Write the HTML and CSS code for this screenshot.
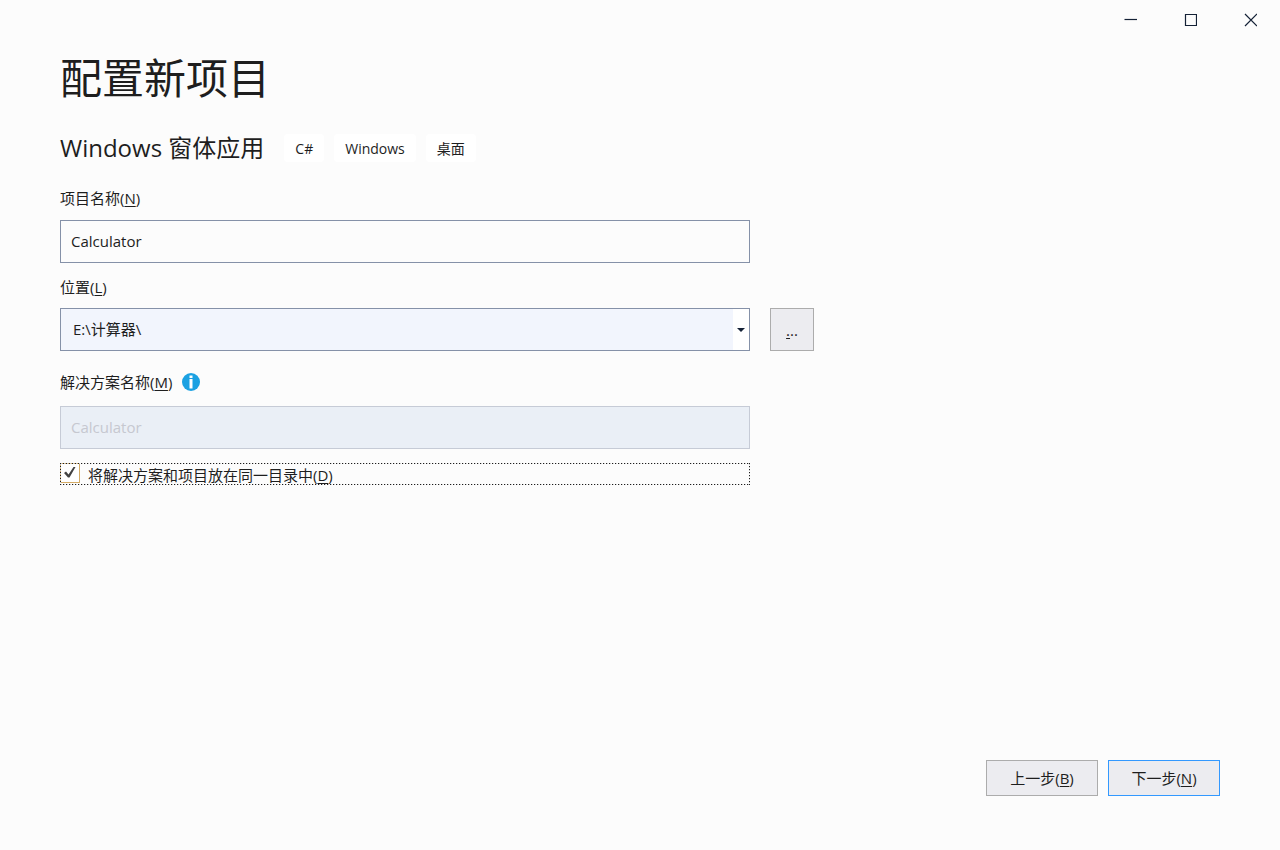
FILE: index.html
```html
<!DOCTYPE html>
<html lang="zh-CN">
<head>
<meta charset="utf-8">
<meta name="viewport" content="width=device-width, initial-scale=1">
<title>配置新项目</title>
<link rel="stylesheet" href="styles.css">
</head>
<body>
<header class="titlebar">
  <button class="caption" type="button" aria-label="最小化"><svg width="14" height="14" viewBox="0 0 14 14"><path d="M1.500 6.500H14" /></svg></button>
  <button class="caption" type="button" aria-label="最大化"><svg width="14" height="14" viewBox="0 0 14 14"><path d="M2.500 1.500H13.500V12.500H2.500Z" /></svg></button>
  <button class="caption" type="button" aria-label="关闭"><svg width="14" height="14" viewBox="0 0 14 14"><path d="M2 1L14 13M14 1L2 13" /></svg></button>
</header>
<main class="content">
  <h1 class="title">配置新项目</h1>
  <div class="template">
    <h2 class="template-name">Windows 窗体应用</h2>
    <ul class="tags">
      <li class="tag">C#</li>
      <li class="tag">Windows</li>
      <li class="tag">桌面</li>
    </ul>
  </div>
  <form class="form" id="project">
    <div class="field">
      <label class="label" for="name">项目名称(<u>N</u>)</label>
      <input class="box" id="name" type="text" value="Calculator" accesskey="n">
    </div>
    <div class="field">
      <label class="label" for="location">位置(<u>L</u>)</label>
      <div class="location">
        <div class="combo">
          <select class="box combo-select" id="location" accesskey="l"><option>E:\计算器\</option></select>
          <span class="combo-arrow"><svg width="8" height="4" viewBox="0 0 8 4"><path d="M0 0H8L4 4Z" /></svg></span>
        </div>
        <button class="browse" type="button" aria-label="浏览"><u>.</u>..</button>
      </div>
    </div>
    <div class="field field-solution">
      <div class="label-row">
        <label class="label" for="solution">解决方案名称(<u>M</u>)</label>
        <svg class="info" width="18" height="18" viewBox="0 0 18 18"><circle cx="9" cy="9" r="9" fill="#1ba1e2" /><path d="M7.500 2.500H10.500V5H7.500ZM7.500 6H10.500V15.500H7.500Z" fill="#fff" /></svg>
      </div>
      <input class="box" id="solution" type="text" value="Calculator" disabled>
    </div>
    <label class="check"><span class="check-box"><input class="check-input" type="checkbox" accesskey="d" checked><svg class="check-mark" width="12" height="12" viewBox="0 0 12 12"><path d="M0 6L2 4.500L4.500 7.500L9.500 0H11.500L5.500 10.500H4Z" /></svg></span><span class="check-text">将解决方案和项目放在同一目录中(<u>D</u>)</span></label>
  </form>
</main>
<footer class="footer">
  <button class="action" type="button" accesskey="b">上一步(<u>B</u>)</button>
  <button class="action action-primary" type="submit" form="project">下一步(<u>N</u>)</button>
</footer>
</body>
</html>
```
FILE: styles.css
```css
* {
  box-sizing: border-box;
}

body {
  margin: 0;
  min-height: 100vh;
  display: flex;
  flex-direction: column;
  background: #fcfcfc;
  color: #1e1e1e;
  font: 15px/20px "Open Sans", "Noto Sans CJK SC", sans-serif;
}

button,
input,
select {
  font: inherit;
  color: inherit;
}

u {
  text-decoration-thickness: 1px;
  text-underline-offset: 2px;
}

.titlebar {
  display: flex;
  justify-content: flex-end;
}

.caption {
  width: 60px;
  height: 40px;
  padding: 0;
  border: 0;
  background: none;
  display: grid;
  place-items: center;
}

.caption path {
  fill: none;
  stroke: #142136;
  stroke-width: 1.2;
}

.content {
  flex: 1;
  padding: 8px 60px 0;
}

.title {
  margin: 0;
  font-size: 42px;
  line-height: 60px;
  font-weight: 400;
}

.template {
  display: flex;
  align-items: center;
  gap: 20px;
  margin-top: 24px;
}

.template-name {
  margin: 0;
  font-size: 24px;
  line-height: 32px;
  font-weight: 400;
}

.tags {
  display: flex;
  gap: 10px;
  margin: 0;
  padding: 0;
  list-style: none;
}

.tag {
  padding: 5px 11px 3px;
  border-radius: 4px;
  background: #fff;
  font-size: 14px;
}

.form {
  max-width: 690px;
  margin-top: 24px;
}

.field {
  margin-bottom: 14px;
}

.label {
  display: block;
}

.label-row {
  display: flex;
  align-items: center;
  gap: 10px;
}

.box {
  display: block;
  width: 100%;
  height: 43px;
  margin-top: 12px;
  padding: 0 10px 2px;
  border: 1px solid #8591a8;
  border-radius: 0;
  background: #fcfcfc;
  outline: 0;
}

.box:disabled {
  margin-top: 14px;
  border-color: #c6cbd6;
  background: #eaeff6;
  color: #c6c8d0;
}

.location {
  display: flex;
  gap: 20px;
  margin-top: 11px;
  margin-right: -64px;
}

.combo {
  position: relative;
  flex: 1;
}

.combo-select {
  appearance: none;
  margin: 0;
  padding: 0 12px 2px;
  background: #f2f5fd;
}

.combo-arrow {
  position: absolute;
  top: 1px;
  right: 1px;
  bottom: 1px;
  width: 16px;
  display: grid;
  place-items: center;
  background: #fff;
  fill: #142136;
  pointer-events: none;
}

.combo-arrow svg {
  display: block;
}

.browse,
.action {
  border: 1px solid #acacac;
  background: #ececf0;
  padding: 0;
}

.browse {
  width: 44px;
  height: 43px;
}

.field-solution {
  margin-top: 21px;
}

.check {
  position: relative;
  display: flex;
  gap: 8px;
  height: 22px;
}

.check::after {
  --dots: #1e1e1e 0 1px, #c8c8c8 1px 2px, transparent 2px 3px;
  content: "";
  position: absolute;
  inset: 0;
  pointer-events: none;
  background:
    repeating-linear-gradient(90deg, var(--dots)) top / 100% 1px no-repeat,
    repeating-linear-gradient(90deg, var(--dots)) bottom / 100% 1px no-repeat,
    repeating-linear-gradient(180deg, var(--dots)) left / 1px 100% no-repeat,
    repeating-linear-gradient(180deg, var(--dots)) right / 1px 100% no-repeat;
}

.check-box {
  position: relative;
  width: 20px;
  height: 20px;
}

.check-input {
  appearance: none;
  display: block;
  width: 20px;
  height: 20px;
  margin: 0;
  border: 1px solid #d4ab65;
  background: #fff;
}

.check-mark {
  position: absolute;
  top: 4px;
  left: 4px;
  fill: #424242;
  visibility: hidden;
}

.check-input:checked + .check-mark {
  visibility: visible;
}

.check-text {
  padding-top: 2px;
}

.footer {
  display: flex;
  justify-content: flex-end;
  gap: 10px;
  padding: 0 60px 54px;
}

.action {
  width: 112px;
  height: 36px;
}

.action-primary {
  border-color: #3399ff;
}
```
